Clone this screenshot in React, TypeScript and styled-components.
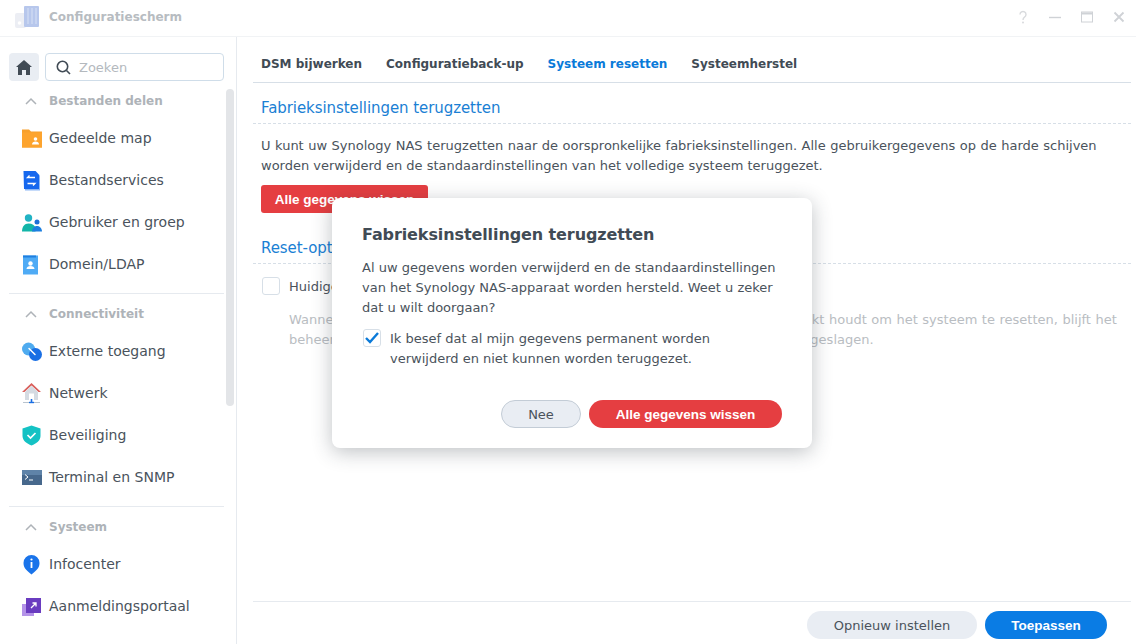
import React from "react";
import styled, { createGlobalStyle } from "styled-components";

const Global = createGlobalStyle`
  html, body { margin: 0; padding: 0; background: #fff; width: 1136px; height: 644px; overflow: hidden; }
  * { box-sizing: border-box; }
  body { font-family: "DejaVu Sans", Verdana, sans-serif; color: #414b55; }
`;

const Window = styled.div`
  position: relative;
  width: 1136px;
  height: 644px;
  display: flex;
  flex-direction: column;
  overflow: hidden;
  background: #fff;
`;
const TitleBar = styled.header`
  height: 37px;
  flex: none;
  display: flex;
  align-items: center;
  padding: 0 10px 3px 15px;
  border-bottom: 1px solid #f1f3f5;
`;
const TitleText = styled.div`
  font-size: 12px;
  font-weight: 700;
  color: #b7bcc1;
  margin-left: 10px;
  flex: 1;
`;
const WinControls = styled.div`
  display: flex;
  align-items: center;
  gap: 18px;
`;
const Body = styled.div`
  flex: 1;
  min-height: 0;
  display: flex;
`;
const Sidebar = styled.aside`
  width: 237px;
  flex: none;
  border-right: 1px solid #e6eaef;
  padding: 16px 0 0 9px;
  position: relative;
  overflow: hidden;
`;
const SearchRow = styled.div`
  display: flex;
  gap: 6px;
  width: 215px;
  height: 28px;
`;
const HomeBtn = styled.div`
  width: 30px;
  height: 28px;
  border-radius: 4px;
  background: #e9edf3;
  display: flex;
  align-items: center;
  justify-content: center;
`;
const Search = styled.div`
  flex: 1;
  border: 1px solid #cfdde9;
  border-radius: 4px;
  display: flex;
  align-items: center;
  padding-left: 10px;
  gap: 8px;
  font-size: 13px;
  color: #b4b9be;
`;
const Scrollbar = styled.div`
  position: absolute;
  left: 226px;
  top: 52px;
  width: 8px;
  height: 317px;
  border-radius: 4px;
  background: #e3e5e8;
`;
const Section = styled.section<{ $divided?: boolean }>`
  width: 215px;
  border-top: ${(p) => (p.$divided ? "1px solid #e6eaef" : "none")};
  padding-bottom: 8px;
`;
const SectionHead = styled.div`
  height: 36px;
  padding: 4px 0 0 16px;
  display: flex;
  align-items: center;
  gap: 12px;
  font-size: 12px;
  font-weight: 700;
  color: #aeb3b8;
`;
const NavItem = styled.div`
  height: 42px;
  display: flex;
  align-items: center;
  gap: 7px;
  padding-left: 12px;
  font-size: 14px;
  color: #4a535c;
  white-space: nowrap;
`;
const NavIcon = styled.svg`
  width: 21px;
  height: 21px;
  flex: none;
`;
const Main = styled.main`
  flex: 1;
  min-width: 0;
  padding: 0 5px 0 16px;
  display: flex;
  flex-direction: column;
`;
const Tabs = styled.nav`
  height: 46px;
  flex: none;
  display: flex;
  align-items: center;
  gap: 24px;
  padding: 8px 0 0 8px;
  border-bottom: 1px solid #d7dfe7;
`;
const Tab = styled.div<{ $active?: boolean }>`
  font-size: 12px;
  font-weight: 700;
  color: ${(p) => (p.$active ? "#0a7ad9" : "#414b55")};
`;
const Content = styled.div`
  flex: 1;
  min-height: 0;
  padding: 0 0 0 8px;
`;
const Heading = styled.h2<{ $gap?: number }>`
  margin: ${(p) => p.$gap ?? 0}px 0 0 -8px;
  padding: 0 0 6px 8px;
  height: 41px;
  display: flex;
  align-items: flex-end;
  font-size: 15px;
  font-weight: 400;
  letter-spacing: -0.07px;
  color: #1a80d4;
  border-bottom: 1px dashed #d7dfe7;
`;
const Para = styled.p`
  margin: 12px 0 0;
  font-size: 13px;
  line-height: 20px;
  color: #4a535c;
  white-space: pre-line;
`;
const WideLine = styled.span`
  display: block;
  word-spacing: 0.37px;
`;
const DangerFlat = styled.div`
  margin-top: 9px;
  width: 167px;
  height: 28px;
  background: #e53e41;
  border-radius: 3px;
  color: #fff;
  font-size: 13.5px;
  font-weight: 700;
  display: flex;
  align-items: center;
  justify-content: center;
  font-family: "Liberation Sans", Arial, sans-serif;
`;
const OptionRow = styled.div`
  display: flex;
  align-items: center;
  gap: 9px;
  margin: 13px 0 0 1px;
  font-size: 13px;
  color: #4a535c;
`;
const Box = styled.div`
  width: 18px;
  height: 18px;
  border: 1px solid #d7dfe7;
  border-radius: 3px;
  background: #fff;
  flex: none;
  display: flex;
  align-items: center;
  justify-content: center;
`;
const Hint = styled.p`
  margin: 15px 0 0 28px;
  font-size: 13px;
  line-height: 20px;
  word-spacing: 0.4px;
  color: #b9bdc2;
  white-space: pre;
`;
const Footer = styled.footer`
  height: 43px;
  flex: none;
  border-top: 1px solid #e6eaef;
  display: flex;
  justify-content: flex-end;
  gap: 8px;
  padding: 9px 24px 0 0;
`;
const Pill = styled.button<{ $bg: string; $fg: string; $w: number; $border?: string; $bold?: boolean }>`
  width: ${(p) => p.$w}px;
  height: 28px;
  border-radius: 14px;
  background: ${(p) => p.$bg};
  color: ${(p) => p.$fg};
  border: ${(p) => (p.$border ? `1px solid ${p.$border}` : "none")};
  font-family: ${(p) => (p.$bold ? `"Liberation Sans", Arial, sans-serif` : `"DejaVu Sans", sans-serif`)};
  font-size: ${(p) => (p.$bold ? "13.5px" : "13px")};
  font-weight: ${(p) => (p.$bold ? 700 : 400)};
  padding: 0;
`;
const Modal = styled.div`
  position: absolute;
  left: 332px;
  top: 198px;
  width: 480px;
  height: 250px;
  background: #fff;
  border-radius: 8px;
  box-shadow: 0 4px 20px rgba(40, 50, 60, 0.3);
  padding: 24px 30px 20px;
  display: flex;
  flex-direction: column;
`;
const ModalTitle = styled.h3`
  margin: 1px 0 -1px;
  height: 24px;
  line-height: 24px;
  font-size: 16px;
  font-weight: 700;
  letter-spacing: -0.1px;
  color: #414b55;
`;
const ModalText = styled.p`
  margin: 12px 0 0;
  font-size: 13px;
  line-height: 20px;
  color: #4a535c;
  white-space: pre-line;
`;
const CheckRow = styled.div`
  display: flex;
  gap: 9px;
  margin: 11px 0 0 1px;
  font-size: 13px;
  line-height: 20px;
  color: #4a535c;
  white-space: pre-line;
`;
const ModalActions = styled.div`
  margin-top: auto;
  display: flex;
  justify-content: flex-end;
  gap: 8px;
`;

const Chevron = () => (
  <svg width="12" height="8" viewBox="0 0 12 8" fill="none">
    <path d="M1 7l5-5 5 5" stroke="#aeb3b8" strokeWidth="1.5" />
  </svg>
);

const items: Record<string, React.ReactNode> = {
  folder: (
    <>
      <path d="M1 1.500h7l2 2h11v16H1z" fill="#f7a02c" />
      <path d="M1 4.500h20v15H1z" fill="#fda42e" />
      <circle cx="14.500" cy="11" r="1.800" fill="#fff" />
      <path d="M11 16.500c0-1.800 1.500-3 3.500-3s3.500 1.200 3.500 3z" fill="#fff" />
    </>
  ),
  file: (
    <>
      <path d="M3 1.500h12l4 4v15H4z" fill="#8db8f5" />
      <path d="M2.500 1h12l3.500 4v14H3z" fill="#1668ee" />
      <path d="M14 7.500H6.500l2-2M6.500 13.500H14l-2 2" stroke="#fff" strokeWidth="1.300" fill="none" />
    </>
  ),
  user: (
    <>
      <circle cx="7.500" cy="6" r="3.700" fill="#22b3c4" />
      <path d="M1 19.500c0-5 2.500-8 6.500-8s6 2 7 4v4z" fill="#12b5a8" />
      <circle cx="16" cy="10" r="2.500" fill="#1c6fd8" />
      <path d="M11 19.500c0-3 2-5.500 5-5.500s5 2.500 5 5.500z" fill="#1c7fe0" />
    </>
  ),
  domain: (
    <>
      <path d="M2 1.500h15v19H2z" fill="#4fabf5" />
      <path d="M2 1.500h13v2H2z" fill="#1f7fe0" />
      <circle cx="9.500" cy="9.500" r="2.200" fill="#fff" />
      <path d="M5.500 15c0-2 1.800-3 4-3s4 1 4 3z" fill="#fff" />
    </>
  ),
  link: (
    <>
      <circle cx="7.500" cy="8" r="6.500" fill="#4fabef" />
      <circle cx="14.500" cy="13.500" r="6.500" fill="#1a6fe4" />
      <path d="M8 7.500l6 6" stroke="#fff" strokeWidth="1.500" strokeLinecap="round" />
    </>
  ),
  net: (
    <>
      <path d="M10.500 0L1 9h2.500l7-6.500 7 6.500H20z" fill="#d9605c" />
      <path d="M4 9l6.500-6L17 9v8H4z" fill="#d5dbe2" />
      <path d="M8 10.500h5V17H8z" fill="#fff" />
      <path d="M2 19.500h17" stroke="#b9c4cf" strokeWidth="1" />
      <path d="M10.500 16v4" stroke="#1a6fe4" strokeWidth="1.600" />
      <path d="M8 19.500h5" stroke="#1a6fe4" strokeWidth="1.400" />
    </>
  ),
  shield: (
    <>
      <path d="M10.500 0.500L19.500 3.500v7.500c0 4.500-4 7.500-9 9.500-5-2-9-5-9-9.500V3.500z" fill="#14c2c4" />
      <path d="M6.500 10l3 3 5-5" stroke="#fff" strokeWidth="1.700" fill="none" />
    </>
  ),
  term: (
    <>
      <rect x="1" y="3" width="20" height="15" fill="#47688c" />
      <path d="M1 3h20v5H1z" fill="#5f83a8" />
      <path d="M4 7.500l3 2.500-3 2.500M8 13h4" stroke="#fff" strokeWidth="1" fill="none" />
    </>
  ),
  info: (
    <>
      <path d="M10.500 20.500c-4-3.500-8-6-8-11.500a8 8 0 0 1 16 0c0 5.500-4 8-8 11.500z" fill="#1a74ea" />
      <circle cx="10.500" cy="5.500" r="1.100" fill="#fff" />
      <path d="M10.500 8v6" stroke="#fff" strokeWidth="1.800" />
    </>
  ),
  portal: (
    <>
      <rect x="1" y="8" width="12" height="12" fill="#b493e8" />
      <rect x="5" y="2" width="15" height="15" fill="#6a3cc0" />
      <path d="M10 12l5-5M11.500 7H15v3.500" stroke="#fff" strokeWidth="1.300" fill="none" />
    </>
  ),
};

const sections = [
  {
    title: "Bestanden delen",
    rows: [
      ["folder", "Gedeelde map"],
      ["file", "Bestandservices"],
      ["user", "Gebruiker en groep"],
      ["domain", "Domein/LDAP"],
    ],
  },
  {
    title: "Connectiviteit",
    rows: [
      ["link", "Externe toegang"],
      ["net", "Netwerk"],
      ["shield", "Beveiliging"],
      ["term", "Terminal en SNMP"],
    ],
  },
  {
    title: "Systeem",
    rows: [
      ["info", "Infocenter"],
      ["portal", "Aanmeldingsportaal"],
    ],
  },
];

export default function App() {
  return (
    <Window>
      <Global />
      <TitleBar>
        <svg width="24" height="24" viewBox="0 0 24 24">
          <rect x="0" y="8" width="11" height="15" rx="2" fill="#eceef4" />
          <rect x="9" y="1" width="15" height="21" rx="1" fill="#b7c7ec" />
          <path d="M13 3v16M17 3v16M21 3v16" stroke="#d7e1f5" strokeWidth="1" />
          <circle cx="4.500" cy="18" r="1.800" fill="#fff" />
        </svg>
        <TitleText>Configuratiescherm</TitleText>
        <WinControls>
          <svg width="14" height="14" viewBox="0 0 14 14" fill="none">
            <path d="M4 4.500a3 3 0 1 1 4.500 2.600C7.500 7.700 7 8.300 7 10" stroke="#d8dadd" strokeWidth="1.400" />
            <circle cx="7" cy="12.500" r="1" fill="#d8dadd" />
          </svg>
          <svg width="14" height="14" viewBox="0 0 14 14">
            <path d="M1 7.500h12" stroke="#cfd2d6" strokeWidth="1.400" />
          </svg>
          <svg width="14" height="14" viewBox="0 0 14 14" fill="none">
            <rect x="1.500" y="2" width="11" height="10" stroke="#cfd2d6" />
            <path d="M1.500 3.500h11" stroke="#cfd2d6" strokeWidth="2" />
          </svg>
          <svg width="14" height="14" viewBox="0 0 14 14">
            <path d="M2.500 2.500l9 9M11.500 2.500l-9 9" stroke="#cfd2d6" strokeWidth="1.800" />
          </svg>
        </WinControls>
      </TitleBar>
      <Body>
        <Sidebar>
          <SearchRow>
            <HomeBtn>
              <svg width="16" height="15" viewBox="0 0 16 15">
                <path d="M8 0L0 7h2v8h4v-5h4v5h4V7h2z" fill="#414b55" />
              </svg>
            </HomeBtn>
            <Search>
              <svg width="15" height="15" viewBox="0 0 15 15" fill="none">
                <circle cx="6.500" cy="6.500" r="5.200" stroke="#414b55" strokeWidth="1.600" />
                <path d="M10.500 10.500l3.500 3.500" stroke="#414b55" strokeWidth="1.600" />
              </svg>
              Zoeken
            </Search>
          </SearchRow>
          <Scrollbar />
          {sections.map((s, i) => (
            <Section key={s.title} $divided={i > 0}>
              <SectionHead>
                <Chevron />
                {s.title}
              </SectionHead>
              {s.rows.map(([ic, label]) => (
                <NavItem key={label}>
                  <NavIcon viewBox="0 0 21 21">{items[ic]}</NavIcon>
                  {label}
                </NavItem>
              ))}
            </Section>
          ))}
        </Sidebar>
        <Main>
          <Tabs>
            <Tab>DSM bijwerken</Tab>
            <Tab>Configuratieback-up</Tab>
            <Tab $active>Systeem resetten</Tab>
            <Tab>Systeemherstel</Tab>
          </Tabs>
          <Content>
            <Heading>Fabrieksinstellingen terugzetten</Heading>
            <Para>
              <WideLine>U kunt uw Synology NAS terugzetten naar de oorspronkelijke fabrieksinstellingen. Alle gebruikergegevens op de harde schijven</WideLine>
              worden verwijderd en de standaardinstellingen van het volledige systeem teruggezet.
            </Para>
            <DangerFlat>Alle gegevens wissen</DangerFlat>
            <Heading $gap={10}>Reset-opties</Heading>
            <OptionRow>
              <Box />
              Huidige account
            </OptionRow>
            <Hint>
              {"Wanneer u deze optie inschakelt en tijdens het resetten uw Reset-knop ingedrukt houdt om het systeem te resetten, blijft het\nbeheerdersaccounts behouden en worden al uw huidige netwerkinstellingen opgeslagen."}
            </Hint>
          </Content>
          <Footer>
            <Pill $w={170} $bg="#e9edf3" $fg="#4a535c">Opnieuw instellen</Pill>
            <Pill $w={122} $bg="#0a7ce4" $fg="#fff" $bold>Toepassen</Pill>
          </Footer>
        </Main>
      </Body>
      <Modal>
        <ModalTitle>Fabrieksinstellingen terugzetten</ModalTitle>
        <ModalText>
          {"Al uw gegevens worden verwijderd en de standaardinstellingen\nvan het Synology NAS-apparaat worden hersteld. Weet u zeker\ndat u wilt doorgaan?"}
        </ModalText>
        <CheckRow>
          <Box>
            <svg width="14" height="12" viewBox="0 0 14 12" fill="none">
              <path d="M1 6l4 4 8-9" stroke="#0a7ad9" strokeWidth="2.400" />
            </svg>
          </Box>
          {"Ik besef dat al mijn gegevens permanent worden\nverwijderd en niet kunnen worden teruggezet."}
        </CheckRow>
        <ModalActions>
          <Pill $w={80} $bg="#e9edf3" $fg="#4a535c" $border="#c3ccd6">Nee</Pill>
          <Pill $w={193} $bg="#e53e41" $fg="#fff" $bold>Alle gegevens wissen</Pill>
        </ModalActions>
      </Modal>
    </Window>
  );
}
